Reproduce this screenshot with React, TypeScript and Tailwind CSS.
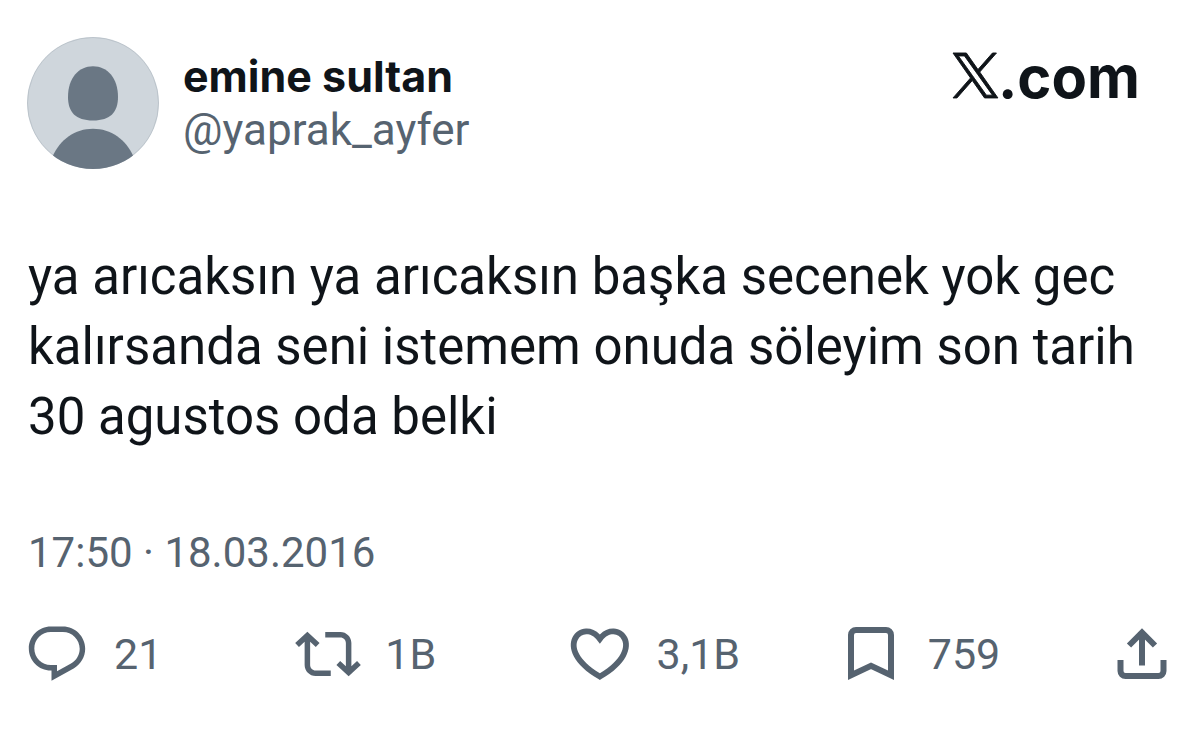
import type { ReactNode } from 'react'

interface ActionProps {
  label: string
  count: string
  children: ReactNode
}

function Action({ label, count, children }: ActionProps) {
  return (
    <div className="flex-1">
      <button type="button" aria-label={`${label} ${count}`} className="flex items-center gap-6 text-[43px] leading-[62px]">
        {children}
        <span>{count}</span>
      </button>
    </div>
  )
}

function Avatar() {
  return (
    <svg viewBox="0 0 132 132" className="size-[132px] shrink-0" aria-hidden="true">
      <defs>
        <clipPath id="avatar-clip">
          <circle cx="66" cy="66" r="66" />
        </clipPath>
      </defs>
      <g clipPath="url(#avatar-clip)">
        <rect width="132" height="132" fill="#cfd6dc" />
        <circle cx="66" cy="66" r="65.5" fill="none" stroke="#bcc4cb" />
        <path
          d="M66 29.3c14.5 0 25 12 25 30.7 0 15-7.5 23.5-25 23.5S41 75 41 60c0-18.7 10.5-30.7 25-30.7z"
          fill="#6a7784"
        />
        <path d="M25.5 119.5C33 102.5 48 91.7 66 91.7s33 10.8 40.5 27.8V132h-81z" fill="#6a7784" />
      </g>
    </svg>
  )
}

function XLogo() {
  return (
    <svg viewBox="0 0 24 24" className="size-[45px] overflow-visible" fill="currentColor" stroke="currentColor" strokeWidth="0.5" aria-hidden="true">
      <path d="M14.258 10.152L23.176 0h-2.113l-7.747 8.813L7.133 0H0l9.352 13.328L0 23.973h2.113l8.176-9.309 6.531 9.309h7.133zm-2.895 3.293l-.949-1.328L2.875 1.56h3.246l6.086 8.523.945 1.328 7.91 11.078h-3.246z" />
    </svg>
  )
}

export default function App() {
  return (
    <article className="bg-white pt-[37px] font-['Roboto',sans-serif] text-[#0f1419]">
      <header className="flex items-start pl-[27px] pr-[59px]">
        <Avatar />
        <div className="ml-6 pt-3">
          <h1 className="font-['Inter',sans-serif] text-[43px] font-bold leading-[54px]">emine sultan</h1>
          <p className="text-[44px] leading-[54px] text-[#566370]">@yaprak_ayfer</p>
        </div>
        <a href="https://x.com" aria-label="X.com" className="ml-auto flex items-baseline pt-1 font-['Inter',sans-serif]">
          <XLogo />
          <span className="text-[58px] font-bold leading-[72px]">.com</span>
        </a>
      </header>

      <p className="mt-[73px] px-7 text-[51px] leading-[70px]">
        ya arıcaksın ya arıcaksın başka secenek yok gec <br />
        kalırsanda seni istemem onuda söleyim son tarih <br />
        30 agustos oda belki
      </p>

      <time dateTime="2016-03-18T17:50" className="mt-[74px] block px-7 text-[42px] leading-[54px] text-[#566370]">
        17:50 · 18.03.2016
      </time>

      <footer className="mt-[41px] flex items-center px-6 pb-12 text-[#566370]">
        <Action label="Yanıt" count="21">
          <svg viewBox="0 0 24 24" className="size-[66px]" fill="currentColor" aria-hidden="true">
            <path d="M1.751 10c0-4.42 3.584-8 8.005-8h4.366c4.49 0 8.129 3.64 8.129 8.13 0 2.96-1.607 5.68-4.196 7.11l-8.054 4.46v-3.69h-.067c-4.49.1-8.183-3.51-8.183-8.01zm8.005-6c-3.317 0-6.005 2.69-6.005 6 0 3.37 2.77 6.08 6.138 6.01l.351-.01h1.761v2.3l5.087-2.81c1.951-1.08 3.163-3.13 3.163-5.36 0-3.39-2.744-6.13-6.129-6.13H9.756z" />
          </svg>
        </Action>
        <Action label="Yeniden gönder" count="1B">
          <svg viewBox="0 0 24 24" className="size-[66px]" fill="currentColor" aria-hidden="true">
            <path d="M4.5 3.88l4.432 4.14-1.364 1.46L5.5 7.55V16c0 1.1.896 2 2 2H13v2H7.5c-2.209 0-4-1.79-4-4V7.55L1.432 9.48.068 8.02 4.5 3.88zM16.5 6H11V4h5.5c2.209 0 4 1.79 4 4v8.45l2.068-1.93 1.364 1.46-4.432 4.14-4.432-4.14 1.364-1.46 2.068 1.93V8c0-1.1-.896-2-2-2z" />
          </svg>
        </Action>
        <Action label="Beğen" count="3,1B">
          <svg viewBox="0.7 0.9 22.7 22.7" className="size-[66px]" fill="currentColor" aria-hidden="true">
            <path d="M16.697 5.5c-1.222-.06-2.679.51-3.89 2.16l-.805 1.09-.806-1.09C9.984 6.01 8.526 5.44 7.304 5.5c-1.243.07-2.349.78-2.91 1.91-.552 1.12-.633 2.78.479 4.82 1.074 1.97 3.257 4.27 7.129 6.61 3.87-2.34 6.052-4.64 7.126-6.61 1.111-2.04 1.03-3.7.477-4.82-.561-1.13-1.666-1.84-2.908-1.91zm4.187 7.69c-1.351 2.48-4.001 5.12-8.379 7.67l-.503.3-.504-.3c-4.379-2.55-7.029-5.19-8.382-7.67-1.36-2.5-1.41-4.86-.514-6.67.887-1.79 2.647-2.91 4.601-3.01 1.651-.09 3.368.56 4.798 2.01 1.429-1.45 3.146-2.1 4.796-2.01 1.954.1 3.714 1.22 4.601 3.01.896 1.81.846 4.17-.514 6.67z" />
          </svg>
        </Action>
        <Action label="Yer işareti" count="759">
          <svg viewBox="0 0 66 66" className="size-[66px]" fill="none" stroke="currentColor" strokeWidth="6" aria-hidden="true">
            <path d="M13 54.2V14a5 5 0 0 1 5-5h30a5 5 0 0 1 5 5v40.2L33 44.8z" />
          </svg>
        </Action>
        <button type="button" aria-label="Paylaş">
          <svg viewBox="0 0 66 66" className="size-[66px]" fill="none" stroke="currentColor" strokeWidth="6" aria-hidden="true">
            <path d="M33 12v32.5M20 24.5l13-13 13 13M11.5 39v11a5 5 0 0 0 5 5h33a5 5 0 0 0 5-5V39" />
          </svg>
        </button>
      </footer>
    </article>
  )
}
